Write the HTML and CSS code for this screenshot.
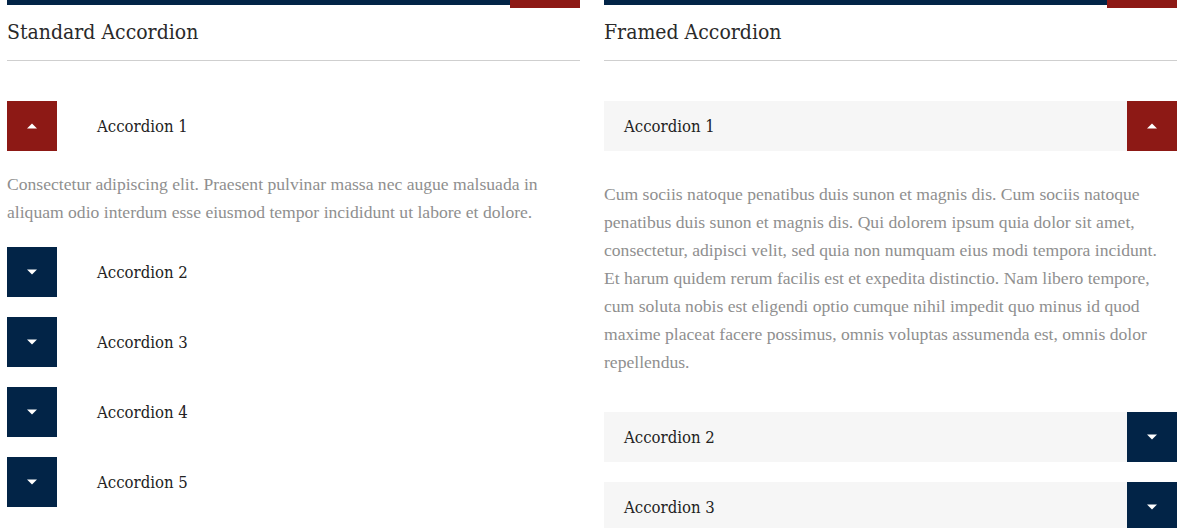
FILE: index.html
```html
<!DOCTYPE html>
<html>
<head>
<meta charset="utf-8">
<link rel="stylesheet" href="styles.css">
</head>
<body>
<div class="page">
  <section class="col">
    <div class="bar"><span class="bar-navy"></span><span class="bar-red"></span></div>
    <h2 class="title">Standard Accordion</h2>
    <div class="rule"></div>
    <div class="acc std">
      <div class="item open">
        <div class="head"><span class="ico"><svg width="10" height="6" viewBox="0 0 10 6"><path d="M0 5.5 L5 0.5 L10 5.5 Z" fill="#fff"/></svg></span><span class="label">Accordion 1</span></div>
        <p class="body">Consectetur adipiscing elit. Praesent pulvinar massa nec augue malsuada in aliquam odio interdum esse eiusmod tempor incididunt ut labore et dolore.</p>
      </div>
      <div class="item">
        <div class="head"><span class="ico"><svg width="10" height="6" viewBox="0 0 10 6"><path d="M0 0.5 L10 0.5 L5 5.5 Z" fill="#fff"/></svg></span><span class="label">Accordion 2</span></div>
      </div>
      <div class="item">
        <div class="head"><span class="ico"><svg width="10" height="6" viewBox="0 0 10 6"><path d="M0 0.5 L10 0.5 L5 5.5 Z" fill="#fff"/></svg></span><span class="label">Accordion 3</span></div>
      </div>
      <div class="item">
        <div class="head"><span class="ico"><svg width="10" height="6" viewBox="0 0 10 6"><path d="M0 0.5 L10 0.5 L5 5.5 Z" fill="#fff"/></svg></span><span class="label">Accordion 4</span></div>
      </div>
      <div class="item">
        <div class="head"><span class="ico"><svg width="10" height="6" viewBox="0 0 10 6"><path d="M0 0.5 L10 0.5 L5 5.5 Z" fill="#fff"/></svg></span><span class="label">Accordion 5</span></div>
      </div>
    </div>
  </section>
  <section class="col">
    <div class="bar"><span class="bar-navy"></span><span class="bar-red"></span></div>
    <h2 class="title">Framed Accordion</h2>
    <div class="rule"></div>
    <div class="acc framed">
      <div class="item open">
        <div class="head"><span class="label">Accordion 1</span><span class="ico"><svg width="10" height="6" viewBox="0 0 10 6"><path d="M0 5.5 L5 0.5 L10 5.5 Z" fill="#fff"/></svg></span></div>
        <p class="body">Cum sociis natoque penatibus duis sunon et magnis dis. Cum sociis natoque penatibus duis sunon et magnis dis. Qui dolorem ipsum quia dolor sit amet, consectetur, adipisci velit, sed quia non numquam eius modi tempora incidunt. Et harum quidem rerum facilis est et expedita distinctio. Nam libero tempore, cum soluta nobis est eligendi optio cumque nihil impedit quo minus id quod maxime placeat facere possimus, omnis voluptas assumenda est, omnis dolor repellendus.</p>
      </div>
      <div class="item">
        <div class="head"><span class="label">Accordion 2</span><span class="ico"><svg width="10" height="6" viewBox="0 0 10 6"><path d="M0 0.5 L10 0.5 L5 5.5 Z" fill="#fff"/></svg></span></div>
      </div>
      <div class="item">
        <div class="head"><span class="label">Accordion 3</span><span class="ico"><svg width="10" height="6" viewBox="0 0 10 6"><path d="M0 0.5 L10 0.5 L5 5.5 Z" fill="#fff"/></svg></span></div>
      </div>
    </div>
  </section>
</div>
</body>
</html>
```
FILE: styles.css
```css
html, body {
  margin: 0;
  padding: 0;
  background: #fff;
}
.page {
  display: grid;
  grid-template-columns: 573px 573px;
  column-gap: 24px;
  padding: 0 6px 0 7px;
  overflow: hidden;
  height: 528px;
}
.col {
  display: flex;
  flex-direction: column;
}
.bar {
  display: flex;
  align-items: flex-start;
  height: 8px;
}
.bar-navy {
  flex: 1;
  height: 5px;
  background: #022447;
}
.bar-red {
  width: 70px;
  height: 8px;
  background: #8d1915;
}
.title {
  margin: 0;
  padding: 11px 0 0;
  height: 41px;
  box-sizing: border-box;
  font-family: "DejaVu Serif Condensed", "DejaVu Serif", serif;
  font-weight: normal;
  font-size: 21px;
  line-height: 26px;
  color: #2a2a2a;
}
.rule {
  height: 1px;
  background: #cfcfcf;
  margin-top: 11px;
}
.acc {
  margin-top: 40px;
  display: flex;
  flex-direction: column;
  gap: 20px;
}
.head {
  display: flex;
  align-items: center;
  height: 50px;
}
.ico {
  width: 50px;
  height: 50px;
  flex: none;
  display: flex;
  align-items: center;
  justify-content: center;
  background: #022447;
}
.open .ico {
  background: #8d1915;
}
.label {
  font-family: "DejaVu Serif Condensed", "DejaVu Serif", serif;
  font-size: 16.6px;
  color: #222;
}
.std .label {
  margin-left: 40px;
}
.framed .head {
  background: #f6f6f6;
  padding-left: 20px;
}
.framed .label {
  flex: 1;
}
.body {
  margin: 0;
  font-family: "Liberation Serif", serif;
  font-size: 17.6px;
  line-height: 28px;
  color: #8f8f8f;
}
.std .body {
  padding: 19px 0 1px;
}
.framed .body {
  padding: 29px 15px 16px 0;
}
```
